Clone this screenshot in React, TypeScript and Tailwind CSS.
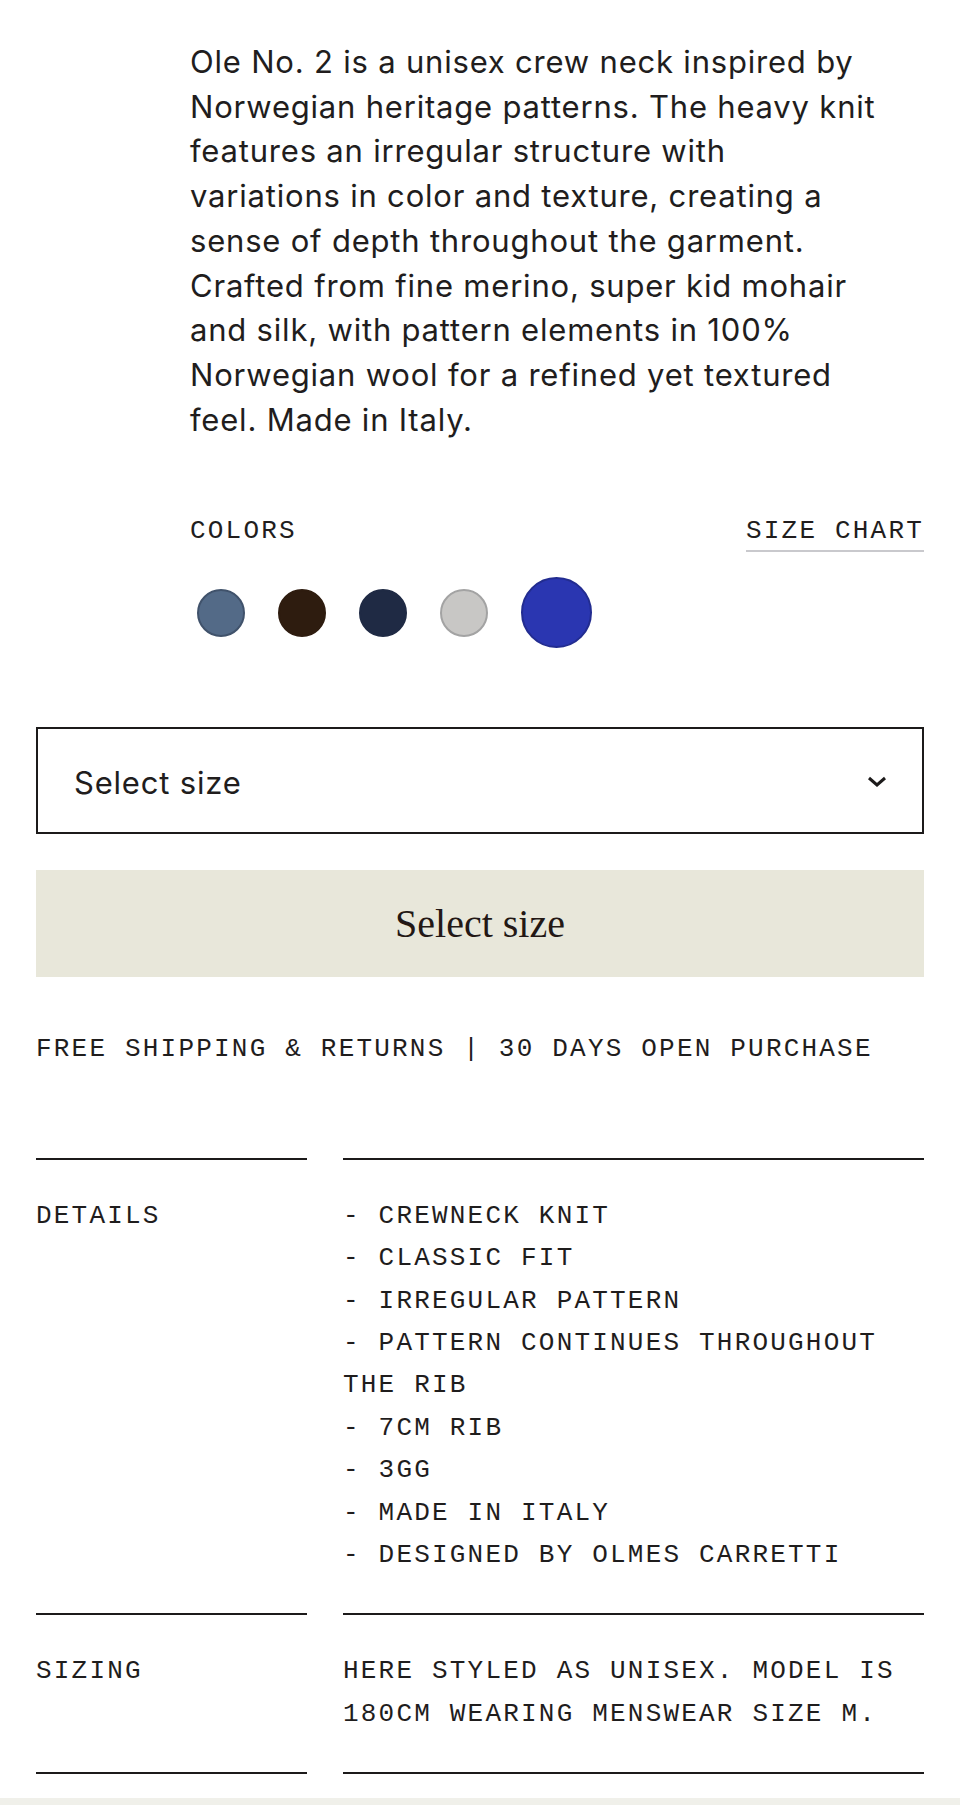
import { Fragment, useState } from 'react';

// line breaks kept as in the design
const description = [
  'Ole No. 2 is a unisex crew neck inspired by',
  'Norwegian heritage patterns. The heavy knit',
  'features an irregular structure with',
  'variations in color and texture, creating a',
  'sense of depth throughout the garment.',
  'Crafted from fine merino, super kid mohair',
  'and silk, with pattern elements in 100%',
  'Norwegian wool for a refined yet textured',
  'feel. Made in Italy.',
];

// swatch classes written out in full so tailwind picks them up
const swatches = [
  { name: 'Slate', cls: 'bg-[#536a87] border-[#40526b]' },
  { name: 'Brown', cls: 'bg-[#2e1c0f] border-[#2e1c0f]' },
  { name: 'Navy', cls: 'bg-[#1f2a44] border-[#1f2a44]' },
  { name: 'Grey', cls: 'bg-[#c8c7c5] border-[#a3a3a3]' },
  { name: 'Blue', cls: 'bg-[#2a36b1] border-[#222c90]' },
];

const details = [
  '- CREWNECK KNIT',
  '- CLASSIC FIT',
  '- IRREGULAR PATTERN',
  '- PATTERN CONTINUES THROUGHOUT THE RIB',
  '- 7CM RIB',
  '- 3GG',
  '- MADE IN ITALY',
  '- DESIGNED BY OLMES CARRETTI',
];

function InfoRow({ label, children }: { label: string; children: React.ReactNode }) {
  return (
    <div className="grid grid-cols-[271px_1fr] gap-x-[36px]">
      <div className="border-t-2 border-[#1c1a1a] pt-[35px] pb-[37px]">{label}</div>
      <div className="border-t-2 border-[#1c1a1a] pt-[35px] pb-[37px]">{children}</div>
    </div>
  );
}

export default function App() {
  const [selected, setSelected] = useState(4);

  return (
    <div className="min-h-screen bg-white text-[#211d1d]">
      <div className="px-[36px] pt-[40px]">
        <section className="pl-[154px]">
          <p className="font-['Inter',sans-serif] text-[31px] leading-[44.7px] tracking-[0.8px]">
            {description.map((line, i) => (
              <Fragment key={i}>
                {line}
                {i < description.length - 1 && <br />}
              </Fragment>
            ))}
          </p>

          <div className="mt-[72px] flex items-start justify-between font-['Liberation_Mono',monospace] text-[26px] leading-[34px] tracking-[2.2px]">
            <span>COLORS</span>
            <a href="#" className="border-b-2 border-[#c9c9cd] pb-[2px]">
              SIZE CHART
            </a>
          </div>

          <div className="mt-[25px] flex h-[71px] items-center gap-[33px] pl-[7px]">
            {swatches.map((s, i) => (
              <button
                key={s.name}
                aria-label={s.name}
                onClick={() => setSelected(i)}
                className={`shrink-0 rounded-full border-2 ${s.cls} ${
                  selected === i ? 'h-[71px] w-[71px]' : 'h-[48px] w-[48px]'
                }`}
              />
            ))}
          </div>
        </section>

        <div className="mt-[79px] flex h-[107px] items-center justify-between border-2 border-[#1c1a1a] pl-[36px] pr-[35px] pt-[4px]">
          <span className="font-['Inter',sans-serif] text-[31px] tracking-[0.8px]">Select size</span>
          <svg width="20" height="11" viewBox="0 0 20 11" fill="none" className="mb-[2px]">
            <polyline points="2,2 10,9 18,2" stroke="#1c1a1a" strokeWidth="3" />
          </svg>
        </div>

        <button className="mt-[36px] flex h-[107px] w-full items-center justify-center bg-[#e8e7da] font-['Liberation_Serif',serif] text-[40px] text-[#231815]">
          Select size
        </button>

        <div className="font-['Liberation_Mono',monospace] text-[26px] leading-[42.4px] tracking-[2.2px] text-[#1f1d1d]">
          <p className="mt-[51px]">FREE SHIPPING &amp; RETURNS | 30 DAYS OPEN PURCHASE</p>

          <div className="mt-[87px]">
            <InfoRow label="DETAILS">
              <ul>
                {details.map((d) => (
                  <li key={d}>{d}</li>
                ))}
              </ul>
            </InfoRow>
            <InfoRow label="SIZING">
              HERE STYLED AS UNISEX. MODEL IS 180CM WEARING MENSWEAR SIZE M.
            </InfoRow>
            <div className="grid grid-cols-[271px_1fr] gap-x-[36px]">
              <div className="border-t-2 border-[#1c1a1a]" />
              <div className="border-t-2 border-[#1c1a1a]" />
            </div>
          </div>
        </div>
      </div>
      <div className="mt-[24px] h-[8px] bg-[#f0f0ea]" />
    </div>
  );
}
